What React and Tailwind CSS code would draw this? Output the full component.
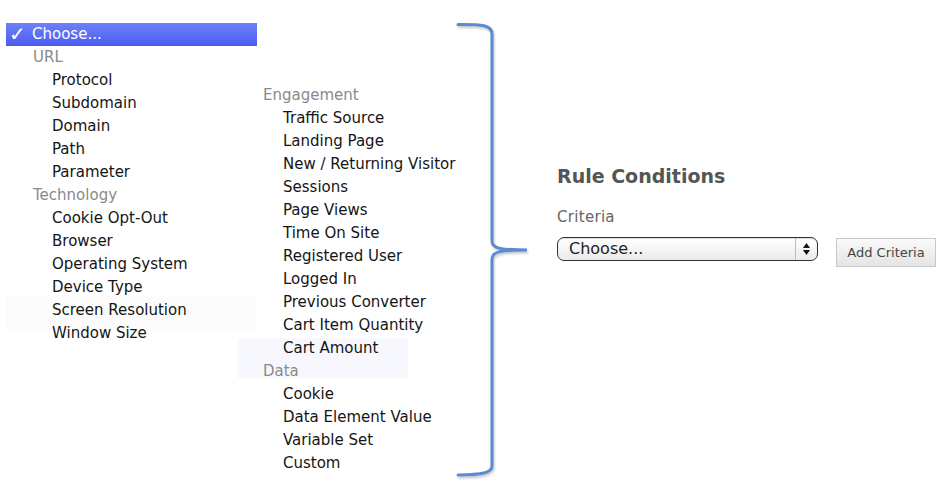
import React from "react";

const leftMenu = [
    { label: "URL", group: true },
    { label: "Protocol" },
    { label: "Subdomain" },
    { label: "Domain" },
    { label: "Path" },
    { label: "Parameter" },
    { label: "Technology", group: true },
    { label: "Cookie Opt-Out" },
    { label: "Browser" },
    { label: "Operating System" },
    { label: "Device Type" },
    { label: "Screen Resolution" },
    { label: "Window Size" },
];

const rightMenu = [
    { label: "Engagement", group: true },
    { label: "Traffic Source" },
    { label: "Landing Page" },
    { label: "New / Returning Visitor" },
    { label: "Sessions" },
    { label: "Page Views" },
    { label: "Time On Site" },
    { label: "Registered User" },
    { label: "Logged In" },
    { label: "Previous Converter" },
    { label: "Cart Item Quantity" },
    { label: "Cart Amount" },
    { label: "Data", group: true },
    { label: "Cookie" },
    { label: "Data Element Value" },
    { label: "Variable Set" },
    { label: "Custom" },
];

const MenuRow = ({ item, groupPad, itemPad }) => (
    <div
        className={`h-[23px] leading-[23px] whitespace-nowrap ${
            item.group ? `text-[#8a8a8a] ${groupPad}` : `text-[#151515] ${itemPad}`
        }`}
    >
        {item.label}
    </div>
);

// faint dialog panels showing through the white overlay
const GhostDialog = () => (
    <div className="absolute inset-0 z-0 pointer-events-none">
        <div className="absolute left-[6px] top-[296px] w-[251px] h-[34px] bg-[#fcfcfc]" />
        <div className="absolute left-[238px] top-[338px] w-[170px] h-[40px] bg-[#f6f8fd]" />
    </div>
);

const Bracket = () => (
    <svg
        width="80"
        height="462"
        viewBox="455 18 80 462"
        className="mt-[18px] shrink-0 drop-shadow-[1px_2px_1px_rgba(0,0,0,0.22)]"
    >
        <path
            d="M458 24.5 C480 24.5 492 24 492 34 L492 241 C492 248 499 250 527 250 C499 250 492 252 492 259 L492 466 C492 473 482 474.5 458 475"
            fill="none"
            stroke="#5b8bd3"
            strokeWidth="3"
            strokeLinecap="round"
        />
    </svg>
);

export default function App() {
    return (
        <div
            className="relative w-[944px] h-[490px] overflow-hidden bg-white"
            style={{ fontFamily: '"DejaVu Sans", Verdana, sans-serif' }}
        >
            <GhostDialog />

            <div className="relative z-10 flex items-start text-[15px]">
                {/* first column of the dropdown */}
                <div className="ml-[6px] mt-[23px] w-[251px] shrink-0">
                    <div className="h-[23px] flex items-center text-white bg-gradient-to-b from-[#6e80f8] to-[#4a5cf1] whitespace-nowrap">
                        <span className="w-[26px] pl-[3px] text-[20px] leading-[21px] font-bold">✓</span>
                        <span className="leading-[21px]">Choose...</span>
                    </div>
                    {leftMenu.map((item, i) => (
                        <MenuRow key={i} item={item} groupPad="pl-[27px]" itemPad="pl-[46px]" />
                    ))}
                </div>

                {/* second column of the dropdown */}
                <div className="mt-[84px] w-[198px] shrink-0">
                    {rightMenu.map((item, i) => (
                        <MenuRow key={i} item={item} groupPad="pl-[6px]" itemPad="pl-[26px]" />
                    ))}
                </div>

                <Bracket />

                {/* rule conditions panel */}
                <div className="ml-[22px] mt-[163px]">
                    <h2 className="text-[19px] leading-[26px] font-bold text-[#555555] whitespace-nowrap">Rule Conditions</h2>
                    <div className="mt-[18px] text-[15px] leading-[20px] text-[#666666] tracking-[0.3px]">Criteria</div>
                    <div className="mt-[10px] flex items-start">
                        <div className="w-[261px] h-[24px] flex rounded-[7px] border border-[#333333] bg-gradient-to-b from-white to-[#ebebeb] shadow-[inset_0_1px_1px_rgba(0,0,0,0.15)] overflow-hidden">
                            <div className="flex-1 pl-[11px] text-[16px] leading-[22px] text-[#1e1e1e]">Choose...</div>
                            <div className="w-[22px] border-l border-[#bdbdbd] flex flex-col items-center justify-center gap-[2px]">
                                <svg width="7" height="5" viewBox="0 0 7 5"><path d="M3.5 0 L7 5 L0 5 Z" fill="#111" /></svg>
                                <svg width="7" height="5" viewBox="0 0 7 5"><path d="M0 0 L7 0 L3.5 5 Z" fill="#111" /></svg>
                            </div>
                        </div>
                        <button className="ml-[18px] mt-[1px] w-[100px] h-[29px] border border-[#c8c8c8] bg-gradient-to-b from-[#fafafa] to-[#e4e4e4] text-[13px] text-[#444] whitespace-nowrap">
                            Add Criteria
                        </button>
                    </div>
                </div>
            </div>
        </div>
    );
}
